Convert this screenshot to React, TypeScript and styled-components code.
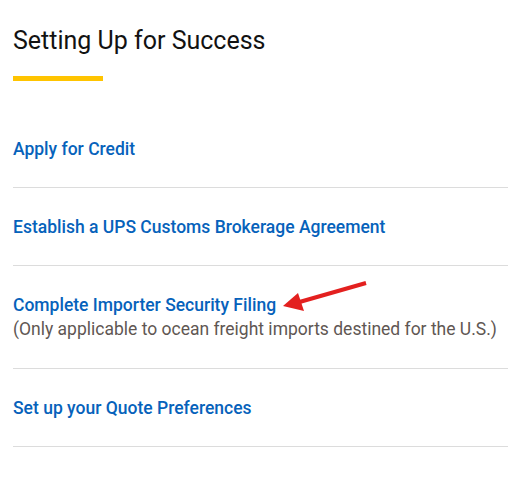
import React from "react";
import styled, { createGlobalStyle } from "styled-components";

const GlobalStyle = createGlobalStyle`
  html, body { margin: 0; padding: 0; background: #ffffff; }
  body { font-family: Roboto, "Noto Sans", Arial, sans-serif; }
`;

const Page = styled.div`
  padding: 27px 14px 0 13px;
  width: 495px;
`;

const Title = styled.h2`
  margin: 0;
  font-size: 25px;
  line-height: 28px;
  font-weight: 400;
  color: #121212;
`;

const Accent = styled.div`
  width: 90px;
  height: 5px;
  background: #ffc400;
  margin-top: 21px;
`;

const List = styled.ul`
  list-style: none;
  margin: 29px 0 0;
  padding: 0;
`;

const Item = styled.li`
  position: relative;
  padding: 27px 0 26px;
  border-bottom: 1px solid #dcdcdc;
`;

const LinkLine = styled.div`
  position: relative;
  display: inline-block;
`;

const ItemLink = styled.a`
  font-size: 17.5px;
  line-height: 24px;
  font-weight: 500;
  color: #0662bb;
  text-decoration: none;
`;

const Note = styled.div`
  font-size: 17.5px;
  line-height: 25px;
  font-weight: 400;
  color: #5f5753;
`;

const Arrow = styled.svg`
  position: absolute;
  left: calc(100% + 4px);
  top: -13px;
`;

const PointerArrow = () => (
  <Arrow width="90" height="34" viewBox="0 0 90 34">
    <line x1="86" y1="3" x2="16" y2="23" stroke="#e3201f" strokeWidth="4" strokeLinecap="butt" />
    <polygon points="3,26 18,13 24,31" fill="#e3201f" />
  </Arrow>
);

const items: { label: string; note?: string; arrow?: boolean }[] = [
  { label: "Apply for Credit" },
  { label: "Establish a UPS Customs Brokerage Agreement" },
  {
    label: "Complete Importer Security Filing",
    note: "(Only applicable to ocean freight imports destined for the U.S.)",
    arrow: true,
  },
  { label: "Set up your Quote Preferences" },
];

export default function App() {
  return (
    <>
      <GlobalStyle />
      <Page>
        <Title>Setting Up for Success</Title>
        <Accent />
        <List>
          {items.map((it) => (
            <Item key={it.label}>
              <LinkLine>
                <ItemLink href="#">{it.label}</ItemLink>
                {it.arrow && <PointerArrow />}
              </LinkLine>
              {it.note && <Note>{it.note}</Note>}
            </Item>
          ))}
        </List>
      </Page>
    </>
  );
}
